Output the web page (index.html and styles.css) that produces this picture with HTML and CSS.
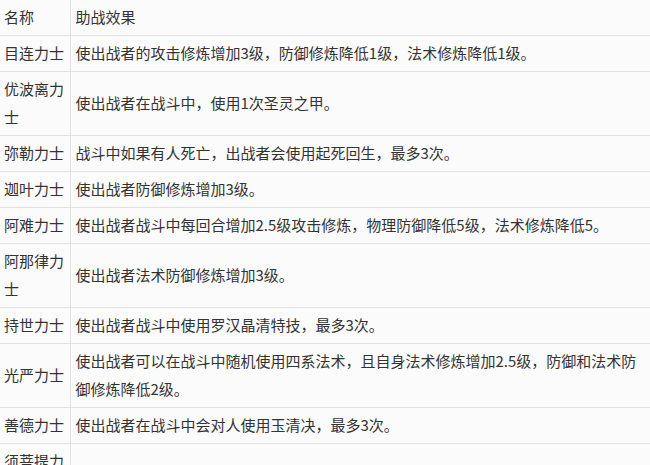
FILE: index.html
```html
<!DOCTYPE html>
<html lang="zh-CN">
<head>
<meta charset="utf-8">
<title>助战效果</title>
<link rel="stylesheet" href="styles.css">
</head>
<body>
<table class="effects">
  <colgroup><col class="col-name"><col class="col-effect"></colgroup>
  <tbody>
    <tr><td>名称</td><td>助战效果</td></tr>
    <tr><td>目连力士</td><td>使出战者的攻击修炼增加3级，防御修炼降低1级，法术修炼降低1级。</td></tr>
    <tr><td>优波离力士</td><td>使出战者在战斗中，使用1次圣灵之甲。</td></tr>
    <tr><td>弥勒力士</td><td>战斗中如果有人死亡，出战者会使用起死回生，最多3次。</td></tr>
    <tr><td>迦叶力士</td><td>使出战者防御修炼增加3级。</td></tr>
    <tr><td>阿难力士</td><td>使出战者战斗中每回合增加2.5级攻击修炼，物理防御降低5级，法术修炼降低5。</td></tr>
    <tr><td>阿那律力士</td><td>使出战者法术防御修炼增加3级。</td></tr>
    <tr><td>持世力士</td><td>使出战者战斗中使用罗汉晶清特技，最多3次。</td></tr>
    <tr><td>光严力士</td><td>使出战者可以在战斗中随机使用四系法术，且自身法术修炼增加2.5级，防御和法术防御修炼降低2级。</td></tr>
    <tr><td>善德力士</td><td>使出战者在战斗中会对人使用玉清决，最多3次。</td></tr>
    <tr><td>须菩提力士</td><td>使出战者在战斗中每回合恢复气血。</td></tr>
  </tbody>
</table>
</body>
</html>
```
FILE: styles.css
```css
html, body {
  margin: 0;
  padding: 0;
  background: #fbfbfb;
}
.effects {
  width: 650px;
  table-layout: fixed;
  border-collapse: collapse;
  font-family: "Noto Sans CJK SC", "Microsoft YaHei", sans-serif;
  font-size: 15px;
  line-height: 28px;
  color: #333333;
}
.col-name { width: 70px; }
.effects td {
  padding: 3px 4px 4px 5px;
  border-top: 1px solid #e2e2e2;
  vertical-align: middle;
}
.effects td:first-child {
  padding-left: 4px;
  border-right: 1px solid #e4e4e4;
}
.effects tr:first-child td {
  border-top: none;
}
```
